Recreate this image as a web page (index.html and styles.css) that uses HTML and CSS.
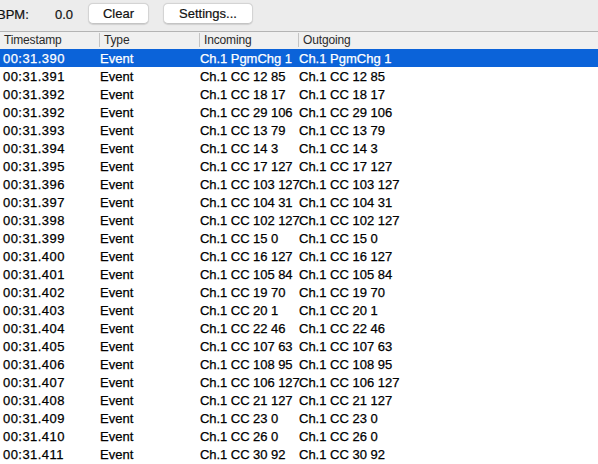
FILE: index.html
```
<!DOCTYPE html>
<html>
<head>
<meta charset="utf-8">
<link rel="stylesheet" href="styles.css">
</head>
<body>
<div class="toolbar">
  <span class="bpm-label">BPM:</span>
  <span class="bpm-value">0.0</span>
  <button class="btn btn-clear">Clear</button>
  <button class="btn btn-settings">Settings...</button>
</div>
<div class="table">
  <div class="header">
    <div class="hcell c1">Timestamp</div>
    <div class="hcell c2">Type</div>
    <div class="hcell c3">Incoming</div>
    <div class="hcell c4">Outgoing</div>
  </div>
  <div class="rows" id="rows">
    <div class="row selected"><div class="cell c1 ts">00:31.390</div><div class="cell c2">Event</div><div class="cell c3">Ch.1 PgmChg 1</div><div class="cell c4">Ch.1 PgmChg 1</div></div>
    <div class="row"><div class="cell c1 ts">00:31.391</div><div class="cell c2">Event</div><div class="cell c3">Ch.1 CC 12 85</div><div class="cell c4">Ch.1 CC 12 85</div></div>
    <div class="row"><div class="cell c1 ts">00:31.392</div><div class="cell c2">Event</div><div class="cell c3">Ch.1 CC 18 17</div><div class="cell c4">Ch.1 CC 18 17</div></div>
    <div class="row"><div class="cell c1 ts">00:31.392</div><div class="cell c2">Event</div><div class="cell c3">Ch.1 CC 29 106</div><div class="cell c4">Ch.1 CC 29 106</div></div>
    <div class="row"><div class="cell c1 ts">00:31.393</div><div class="cell c2">Event</div><div class="cell c3">Ch.1 CC 13 79</div><div class="cell c4">Ch.1 CC 13 79</div></div>
    <div class="row"><div class="cell c1 ts">00:31.394</div><div class="cell c2">Event</div><div class="cell c3">Ch.1 CC 14 3</div><div class="cell c4">Ch.1 CC 14 3</div></div>
    <div class="row"><div class="cell c1 ts">00:31.395</div><div class="cell c2">Event</div><div class="cell c3">Ch.1 CC 17 127</div><div class="cell c4">Ch.1 CC 17 127</div></div>
    <div class="row"><div class="cell c1 ts">00:31.396</div><div class="cell c2">Event</div><div class="cell c3">Ch.1 CC 103 127</div><div class="cell c4">Ch.1 CC 103 127</div></div>
    <div class="row"><div class="cell c1 ts">00:31.397</div><div class="cell c2">Event</div><div class="cell c3">Ch.1 CC 104 31</div><div class="cell c4">Ch.1 CC 104 31</div></div>
    <div class="row"><div class="cell c1 ts">00:31.398</div><div class="cell c2">Event</div><div class="cell c3">Ch.1 CC 102 127</div><div class="cell c4">Ch.1 CC 102 127</div></div>
    <div class="row"><div class="cell c1 ts">00:31.399</div><div class="cell c2">Event</div><div class="cell c3">Ch.1 CC 15 0</div><div class="cell c4">Ch.1 CC 15 0</div></div>
    <div class="row"><div class="cell c1 ts">00:31.400</div><div class="cell c2">Event</div><div class="cell c3">Ch.1 CC 16 127</div><div class="cell c4">Ch.1 CC 16 127</div></div>
    <div class="row"><div class="cell c1 ts">00:31.401</div><div class="cell c2">Event</div><div class="cell c3">Ch.1 CC 105 84</div><div class="cell c4">Ch.1 CC 105 84</div></div>
    <div class="row"><div class="cell c1 ts">00:31.402</div><div class="cell c2">Event</div><div class="cell c3">Ch.1 CC 19 70</div><div class="cell c4">Ch.1 CC 19 70</div></div>
    <div class="row"><div class="cell c1 ts">00:31.403</div><div class="cell c2">Event</div><div class="cell c3">Ch.1 CC 20 1</div><div class="cell c4">Ch.1 CC 20 1</div></div>
    <div class="row"><div class="cell c1 ts">00:31.404</div><div class="cell c2">Event</div><div class="cell c3">Ch.1 CC 22 46</div><div class="cell c4">Ch.1 CC 22 46</div></div>
    <div class="row"><div class="cell c1 ts">00:31.405</div><div class="cell c2">Event</div><div class="cell c3">Ch.1 CC 107 63</div><div class="cell c4">Ch.1 CC 107 63</div></div>
    <div class="row"><div class="cell c1 ts">00:31.406</div><div class="cell c2">Event</div><div class="cell c3">Ch.1 CC 108 95</div><div class="cell c4">Ch.1 CC 108 95</div></div>
    <div class="row"><div class="cell c1 ts">00:31.407</div><div class="cell c2">Event</div><div class="cell c3">Ch.1 CC 106 127</div><div class="cell c4">Ch.1 CC 106 127</div></div>
    <div class="row"><div class="cell c1 ts">00:31.408</div><div class="cell c2">Event</div><div class="cell c3">Ch.1 CC 21 127</div><div class="cell c4">Ch.1 CC 21 127</div></div>
    <div class="row"><div class="cell c1 ts">00:31.409</div><div class="cell c2">Event</div><div class="cell c3">Ch.1 CC 23 0</div><div class="cell c4">Ch.1 CC 23 0</div></div>
    <div class="row"><div class="cell c1 ts">00:31.410</div><div class="cell c2">Event</div><div class="cell c3">Ch.1 CC 26 0</div><div class="cell c4">Ch.1 CC 26 0</div></div>
    <div class="row"><div class="cell c1 ts">00:31.411</div><div class="cell c2">Event</div><div class="cell c3">Ch.1 CC 30 92</div><div class="cell c4">Ch.1 CC 30 92</div></div>
  </div>
</div>
</body>
</html>
```
FILE: styles.css
```
html, body {
  margin: 0;
  padding: 0;
  background: #ffffff;
  overflow: hidden;
}
body {
  width: 598px;
  height: 464px;
  font-family: "Liberation Sans", Arial, sans-serif;
  font-size: 13px;
  color: #000;
}
.toolbar {
  height: 31px;
  background: #ececec;
  border-bottom: 1px solid #b4b4b4;
  display: flex;
  align-items: center;
  box-sizing: content-box;
}
.bpm-label {
  margin-left: -3px;
  width: 58px;
  font-size: 13px;
  color: #111;
  margin-top: -3px;
  -webkit-text-stroke: 0.2px #111;
}
.bpm-value {
  width: 33px;
  font-size: 13px;
  color: #111;
  margin-top: -3px;
  -webkit-text-stroke: 0.2px #111;
}
.btn {
  height: 21px;
  background: #ffffff;
  border: 1px solid #d4d4d4;
  border-bottom-color: #c4c4c4;
  border-radius: 5px;
  box-shadow: 0 0.5px 1px rgba(0,0,0,0.12);
  font-family: "Liberation Sans", Arial, sans-serif;
  font-size: 13px;
  color: #111;
  -webkit-text-stroke: 0.2px #111;
  padding: 0;
  margin-top: -5px;
  box-sizing: border-box;
}
.btn-clear {
  width: 61px;
}
.btn-settings {
  width: 90px;
  margin-left: 14px;
}
.table {
  background: #ffffff;
}
.header {
  height: 17px;
  background: #f0f0f0;
  display: flex;
  align-items: center;
}
.hcell {
  font-size: 12px;
  letter-spacing: -0.15px;
  color: #2a2a2a;
  box-sizing: border-box;
  height: 17px;
  line-height: 16px;
}
.hcell.c1 { width: 99px; padding-left: 4px; }
.hcell.c2 { width: 100px; padding-left: 4px; }
.hcell.c3 { width: 99px; padding-left: 4px; }
.hcell.c4 { flex: 1; padding-left: 4px; }
.hcell.c2, .hcell.c3, .hcell.c4 {
  border-left: 1px solid #c8c8c8;
  border-image: linear-gradient(to bottom, transparent 2px, #c4c4c4 2px, #c4c4c4 14px, transparent 14px) 1;
}
.row {
  height: 18px;
  display: flex;
  align-items: flex-start;
  line-height: 18px;
  -webkit-text-stroke: 0.25px #000;
}
.row.selected {
  background: #0b63d9;
  color: #ffffff;
  -webkit-text-stroke: 0.25px #ffffff;
}
.cell {
  white-space: nowrap;
  box-sizing: border-box;
  overflow: visible;
  padding-top: 1px;
  height: 18px;
  line-height: 17px;
}
.cell.c1 { width: 99px; padding-left: 3px; }
.cell.c2 { width: 100px; padding-left: 1px; }
.cell.c3 { width: 99px; padding-left: 1px; letter-spacing: -0.05px; }
.cell.c4 { flex: 1; padding-left: 1px; }
.ts {
  letter-spacing: 0.45px;
}
```
